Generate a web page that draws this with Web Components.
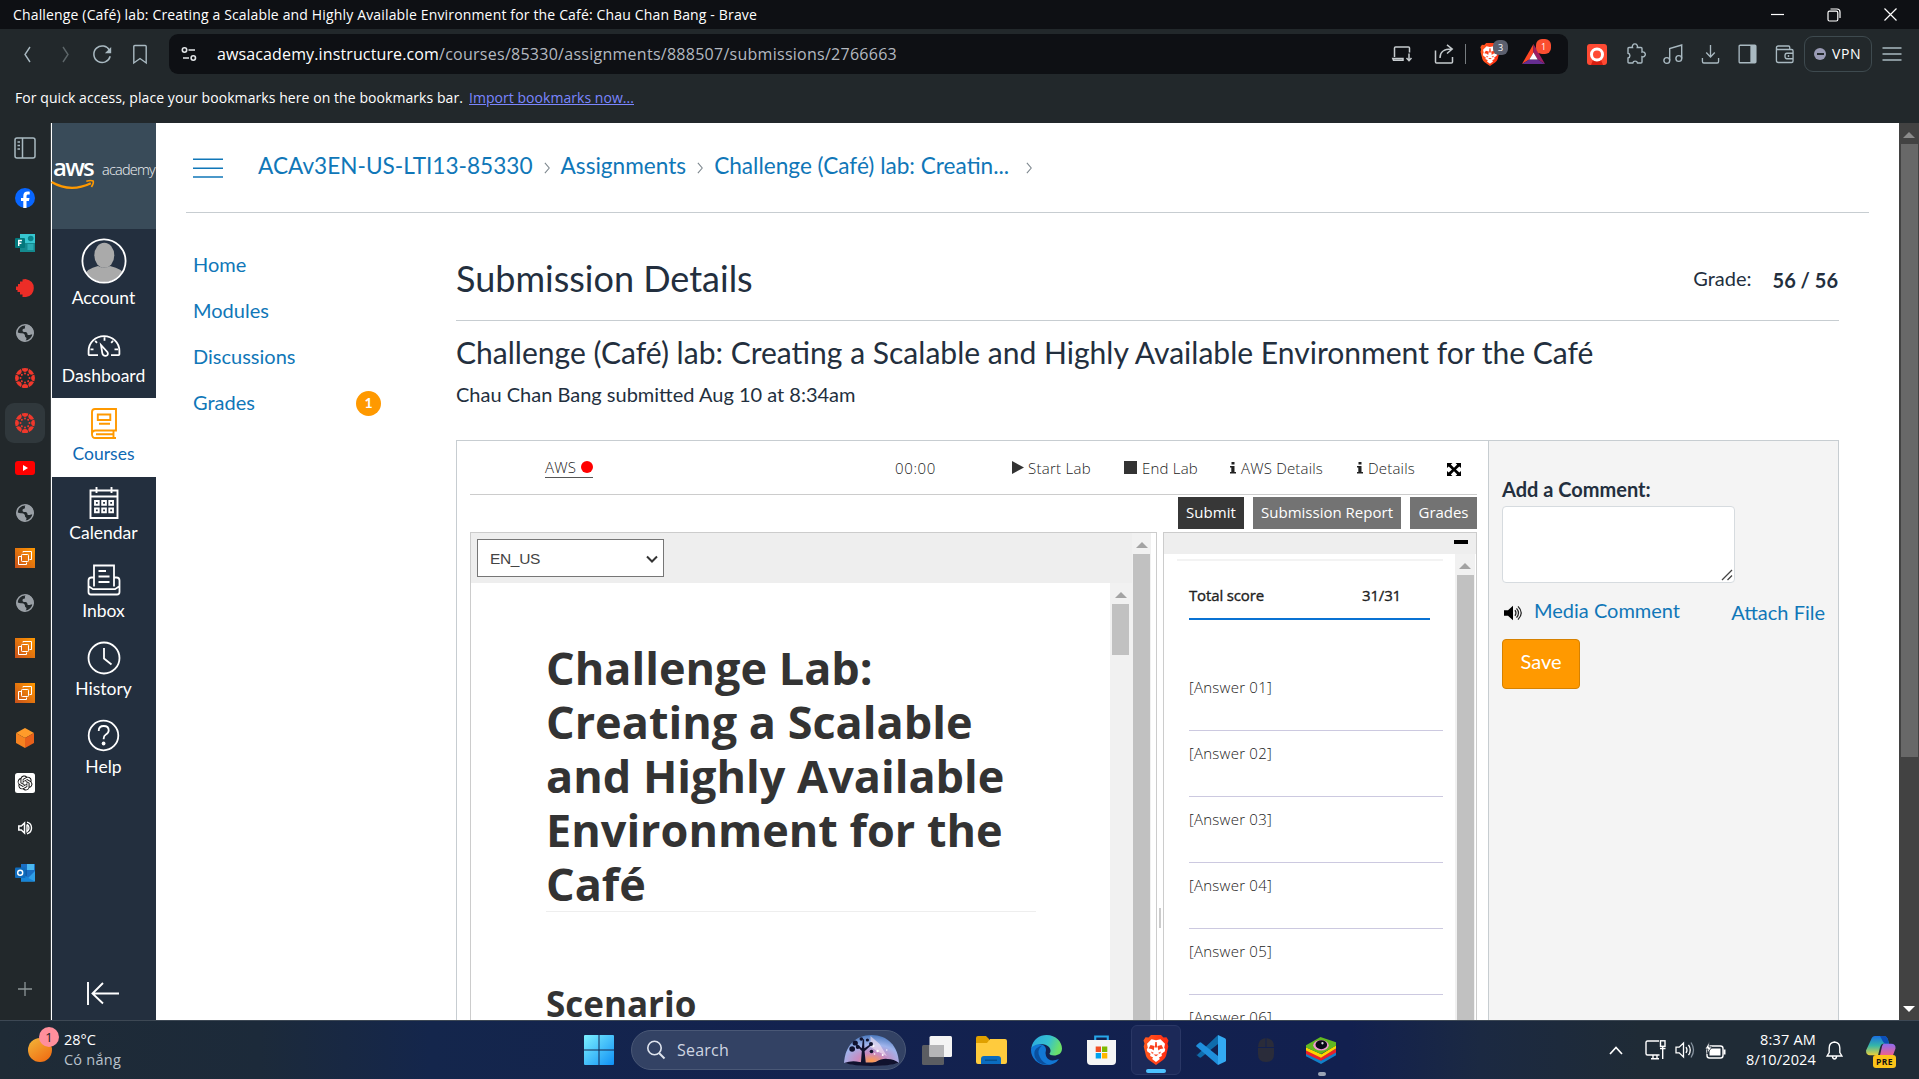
<!DOCTYPE html>
<html lang="en">
<head>
<meta charset="utf-8">
<title>Challenge (Café) lab: Chau Chan Bang</title>
<style>
html,body{margin:0;height:100%;overflow:hidden;background:#22282b}
</style>
</head>
<body>
<app-desktop></app-desktop>
<script>
const define = (name, html, setup) => {
  const t = document.createElement('template');
  t.innerHTML = '<style>*{box-sizing:border-box}:host{box-sizing:border-box}</style>' + html;
  customElements.define(name, class extends HTMLElement {
    constructor() { super(); this.attachShadow({mode: 'open'}).appendChild(t.content.cloneNode(true)); }
    connectedCallback() { if (setup) setup(this, this.shadowRoot); }
  });
};

/* Icon set: [viewBox, markup] */
const lion = '<defs><linearGradient id="l" x1="0" y1="0" x2="1" y2="0"><stop offset="0" stop-color="#ff5a1f"/><stop offset="1" stop-color="#ff2a12"/></linearGradient></defs><path fill="url(#l)" d="M8 0h10l2.500 2.500 3-.3 2 3.300-1 3 .8 3-2.300 9.500q-.8 2.500-3 4L13 30l-7-5q-2.200-1.500-3-4L.7 11.500l.8-3-1-3 2-3.300 3 .3z"/><path fill="#fff" d="M13 5.300l4.500-1 4.500 4.500-.8 4 1 1.500-.5 2.200-3.200 2.300.4 2.200-3 1.500 1 1.500-3.900 3-3.900-3 1-1.500-3-1.500.4-2.200-3.200-2.300-.5-2.200 1-1.500-.8-4 4.500-4.500z"/><path fill="#fb401c" d="M7.500 10l4 1-.8 4.500-2-1.500-3-.5zM18.500 10l-4 1 .8 4.500 2-1.500 3-.5zM10.500 19.500h5L13 21.200zM12.300 7h1.400l.5 5.500h-2.400zM8 16.500l3 1.500-2 .8zM18 16.500l-3 1.500 2 .8z"/>';
const ec2 = '<defs><linearGradient id="g" x1="0" y1="1" x2="1" y2="0"><stop offset="0" stop-color="#c8511b"/><stop offset="1" stop-color="#f90"/></linearGradient></defs><path fill="url(#g)" d="M0 0h20v20H0z"/><g fill="none" stroke="#fff" stroke-width="1"><rect x="6.500" y="6.500" width="7" height="7" rx=".8"/><path d="M8 4.500V3.500h8.500v8H14.500M6 8.500H3.500v8h8V14.500"/></g>';
const globe = '<circle cx="10" cy="10" r="8.200" fill="none" stroke="#9aa0a6" stroke-width="1.600"/><path fill="#9aa0a6" d="M11.500 1.500c-1.200.8-2 2-1.500 3.200 0 1.300-2.500.8-2.500 2.600 0 1.700 1.200 1.700 2.300 1.700 1.500 0 2.700.5 2.700 2.200 0 1.300 2.300.8 3.500.2l2.500-.2C19 5 15.500 2 11.500 1.500zM1.500 8.500c1.500 2 4 1.700 5.500 1.800 2.200.2 3.200 1.500 3 3 0 1.200 1.500.8 1.500 2.200 0 1.200-1 1.500-1 3C5 18.800 1 14.500 1.500 8.500z"/>';
const canvasDots = (() => { let s = ''; for (let i = 0; i < 8; i++) s += `<g transform="rotate(${i * 45} 10 10)"><path d="M6.700 .6a10 10 0 0 1 6.600 0q-.4 3.300-3.300 3.300T6.700.6z"/><circle cx="10" cy="5.500" r="1"/></g>`; return `<g fill="#f0382c">${s}</g>`; })();
const ICONS = {
  back: ['0 0 20 20', '<path d="M12 3L7 10.500 12 18" fill="none" stroke="#a9b9c1" stroke-width="1.400"/>'],
  fwd: ['0 0 20 20', '<path d="M8 3l5 7.500L8 18" fill="none" stroke="#5d6669" stroke-width="1.400"/>'],
  reload: ['0 0 20 20', '<path d="M18.200 12.300A8.300 8.300 0 1 1 17.600 6.500" fill="none" stroke="#a9b9c1" stroke-width="1.500"/><path d="M19.200 3v6.300h-6.300z" fill="#a9b9c1"/>'],
  mark: ['0 0 20 20', '<path d="M3.800 2.500q0-1 1-1h10.400q1 0 1 1V19l-6.200-4.500L3.800 19z" fill="none" stroke="#a9b9c1" stroke-width="1.400"/>'],
  tune: ['0 0 18 18', '<g fill="none" stroke="#e3e6e8" stroke-width="1.600"><circle cx="4.500" cy="5" r="2.200"/><path d="M8.500 5H15M3 13h6"/><circle cx="13.300" cy="13" r="2.200"/></g>'],
  laptop: ['0 0 20 20', '<g fill="none" stroke="#c6cbce" stroke-width="1.500"><path d="M2.500 13V4q0-1 1-1h13q1 0 1 1v4.500M.8 14.500H11v1.800H1.500zM17 9.500v7M14.500 14l2.500 2.700 2.500-2.700"/></g>'],
  share: ['0 0 20 20', '<g fill="none" stroke="#c6cbce" stroke-width="1.500"><path d="M1.500 6.500V18q0 1 1 1h15q1 0 1-1v-5M6 14c0-6 3-9 12-9M13 .8L18.200 5 13 9.500"/></g>'],
  lion: ['0 0 26 30', lion],
  bat: ['0 0 22 20', '<path fill="#ff4724" d="M11 0L0 20l7-4.500 4-7z"/><path fill="#9e1f63" d="M11 0l11 20-7-4.500-4-7z"/><path fill="#662d91" d="M0 20h22l-7-4.500H7z"/><path fill="#fff" d="M11 8.500l4 7H7z"/>'],
  rec: ['0 0 20 21', '<rect width="20" height="21" rx="3" fill="#ff4a33"/><path fill="#d81e10" d="M6 16h8l2 5H4z"/><circle cx="10" cy="10.500" r="5.500" fill="none" stroke="#fff" stroke-width="3"/>'],
  puzzle: ['0 0 20 20', '<path d="M5 3.500h2.500a2.600 2.600 0 1 1 4.800 0H16q1 0 1 1V8a2.500 2.500 0 1 1 0 4.700V18q0 1-1 1h-3.500a2.400 2.400 0 0 0-4.700 0H4q-1 0-1-1v-4a2.400 2.400 0 0 0 0-4.700V4.500q0-1 1-1z" fill="none" stroke="#a9b9c1" stroke-width="1.400"/>'],
  music: ['0 0 20 20', '<g fill="none" stroke="#a9b9c1" stroke-width="1.400"><circle cx="3.800" cy="16.500" r="2.900"/><circle cx="15.800" cy="14.500" r="2.900"/><path d="M6.700 16.500V4.500L18.700 1v13.500"/></g>'],
  down: ['0 0 20 20', '<path d="M10 1v12M5.500 8.500L10 13l4.500-4.500M1.500 14v3.500q0 1.500 1.500 1.500h14q1.500 0 1.500-1.500V14" fill="none" stroke="#a9b9c1" stroke-width="1.400"/>'],
  panel: ['0 0 20 20', '<rect x="1.200" y="1.200" width="17.600" height="17.600" rx="1" fill="none" stroke="#a9b9c1" stroke-width="1.400"/><path fill="#a9b9c1" d="M13 1h6v18h-6z"/>'],
  wallet: ['0 0 20 20', '<g fill="none" stroke="#a9b9c1" stroke-width="1.400"><path d="M15.500 5V3.300q0-1.300-1.300-1.300H3.500Q1.500 2 1.500 4v12.500q0 2 2 2h14q1.500 0 1.500-1.500V7q0-1.500-1.500-1.500H3.500Q1.500 5.500 1.500 4M19 9.300h-6.500q-2 0-2 2.700t2 2.700H19"/></g><circle cx="14.200" cy="12" r=".9" fill="#a9b9c1"/>'],
  menu: ['0 0 20 20', '<path d="M.5 4h19M.5 10h19M.5 16h19" stroke="#a9b9c1" stroke-width="1.400"/>'],
  min: ['0 0 13 13', '<path d="M0 6.500h13" stroke="#fff" stroke-width="1.200"/>'],
  restore: ['0 0 14 14', '<g fill="none" stroke="#fff" stroke-width="1.200"><rect x="1" y="3.200" width="9.800" height="9.800" rx="1.500"/><path d="M3.500 1h6.500q3 0 3 3v6"/></g>'],
  close: ['0 0 13 13', '<path d="M.5.5l12 12M12.500.5l-12 12" stroke="#fff" stroke-width="1.200"/>'],
  tabs: ['0 0 22 22', '<g fill="none" stroke="#a9b9c1" stroke-width="1.500"><rect x="1" y="1" width="20" height="20" rx="2"/><path d="M8.500 1v20"/><path d="M3.500 5h2.500M3.500 8.500h2.500M3.500 12h2.500"/></g>'],
  fb: ['0 0 20 20', '<circle cx="10" cy="10" r="10" fill="#0866ff"/><path fill="#fff" d="M8.300 20v-7H6v-3h2.300V8.300c0-3.300 1.500-4.700 4.500-4.700.6 0 1.400.1 1.900.2v2.700h-1.300c-1.400 0-1.900.6-1.900 1.900V10h3l-.6 3h-2.400v7z"/>'],
  forms: ['0 0 20 20', '<path fill="#37c6d0" d="M5 1h15v9H5z"/><path fill="#148a8f" d="M5 10h15v9H5z"/><path fill="#2aabb3" d="M12.500 11h6v6h-6z"/><circle cx="15.700" cy="5.500" r="2.800" fill="#08838a"/><rect y="5" width="10" height="10" rx="1" fill="#03787c"/><path d="M3.700 13V7.500h3.200M3.700 10.200h2.700" fill="none" stroke="#fff" stroke-width="1.400"/>'],
  red: ['0 0 20 20', '<path fill="#ec2d27" d="M10.500 1Q18.800 2.500 18.800 10T11 19H7.500v-2.500H5V14H2.500v-2H1V8.500h2V6h2V3.500h2.500V1.500z"/>'],
  globe: ['0 0 20 20', globe],
  canvas: ['0 0 20 20', canvasDots],
  yt: ['0 0 20 14', '<rect width="20" height="14" rx="3" fill="#f00"/><path fill="#fff" d="M8 4l5 3-5 3z"/>'],
  ec2: ['0 0 20 20', ec2],
  cube: ['0 0 20 20', '<path fill="#ff9b2a" d="M10 0l9 5-9 5-9-5z"/><path fill="#f58220" d="M1 5l9 5v10l-9-5z"/><path fill="#e8601a" d="M19 5l-9 5v10l9-5z"/>'],
  gpt: ['0 0 20 20', '<rect width="20" height="20" rx="2.500" fill="#fff"/><path transform="translate(2.500 2.500) scale(.625)" fill="#111" d="M22.282 9.821a5.985 5.985 0 0 0-.516-4.911 6.046 6.046 0 0 0-6.510-2.900A6.065 6.065 0 0 0 4.981 4.182a5.985 5.985 0 0 0-3.998 2.900 6.046 6.046 0 0 0 .743 7.097 5.980 5.980 0 0 0 .511 4.911 6.051 6.051 0 0 0 6.515 2.900A5.985 5.985 0 0 0 13.260 24a6.056 6.056 0 0 0 5.772-4.206 5.989 5.989 0 0 0 3.998-2.900 6.056 6.056 0 0 0-.748-7.073zm-9.022 12.608a4.476 4.476 0 0 1-2.876-1.041l.142-.080 4.778-2.758a.795.795 0 0 0 .393-.681v-6.737l2.020 1.169a.071.071 0 0 1 .038.052v5.583a4.504 4.504 0 0 1-4.495 4.494zm-9.661-4.125a4.471 4.471 0 0 1-.535-3.014l.142.085 4.783 2.758a.771.771 0 0 0 .781 0l5.843-3.369v2.332a.080.080 0 0 1-.033.062L9.740 19.950a4.499 4.499 0 0 1-6.141-1.646zM2.341 7.896a4.485 4.485 0 0 1 2.366-1.973V11.600a.766.766 0 0 0 .388.677l5.814 3.354-2.020 1.169a.076.076 0 0 1-.071 0l-4.830-2.787A4.504 4.504 0 0 1 2.341 7.872zm16.596 3.856L13.104 8.364 15.119 7.200a.076.076 0 0 1 .071 0l4.830 2.791a4.494 4.494 0 0 1-.677 8.104v-5.677a.790.790 0 0 0-.407-.667zm2.011-3.023l-.142-.085-4.774-2.782a.776.776 0 0 0-.785 0L9.409 9.230V6.897a.066.066 0 0 1 .028-.062l4.830-2.787a4.499 4.499 0 0 1 6.680 4.660zM8.307 12.863l-2.020-1.164a.080.080 0 0 1-.038-.057V6.074a4.499 4.499 0 0 1 7.376-3.454l-.142.081L8.704 5.459a.795.795 0 0 0-.393.681zm1.098-2.365l2.602-1.500 2.607 1.500v2.999l-2.597 1.500-2.607-1.500Z"/>'],
  sound: ['0 0 20 20', '<path fill="none" stroke="#fff" stroke-width="1.500" d="M3.800 8v4h2.500l3.200 3V5L6.300 8z"/><path d="M12 4.200q4.500 1.300 4.500 5.800T12 15.800M12 6.500V13.500q2-1 2-3.500t-2-3.500" fill="none" stroke="#fff" stroke-width="1.400"/>'],
  outlook: ['0 0 20 20', '<path fill="#1a6fc4" d="M6 1h14v17H6z"/><path fill="#4bb8f0" d="M12 1h7v6h-7z"/><path fill="#0f5aa8" d="M6 7h6v6H6z"/><path fill="#2f9fe8" d="M20 8v10.500H6V11l7 4z"/><path fill="#1684d8" d="M6 11l14 7.500H6z"/><rect y="4.500" width="10.500" height="10.500" rx="1" fill="#0f6cbd"/><circle cx="5.200" cy="9.700" r="2.500" fill="none" stroke="#fff" stroke-width="1.400"/>'],
  plus: ['0 0 14 14', '<path d="M7 0v14M0 7h14" stroke="#8d9598" stroke-width="1.300"/>'],
  swoosh: ['0 0 43 12', '<path d="M.5 3Q19 14 39 4.300" fill="none" stroke="#f90" stroke-width="2.300"/><path d="M34.500 2.200q4.500-1.300 6.700-.2.800 2-1.700 6" fill="none" stroke="#f90" stroke-width="1.600"/>'],
  account: ['0 0 46 46', '<defs><clipPath id="c"><circle cx="23" cy="23" r="21"/></clipPath></defs><circle cx="23" cy="23" r="21.500" fill="#243041"/><g clip-path="url(#c)" fill="#aaa"><ellipse cx="23.300" cy="17.300" rx="10" ry="12.500"/><path d="M4 46V37q1-6 13-9 6 3.500 12 0 13 3 14 9v9z"/></g><circle cx="23" cy="23" r="21.600" fill="none" stroke="#fff" stroke-width="1.800"/>'],
  dash: ['0 0 34 24', '<g fill="none" stroke="#fff" stroke-width="1.800"><path d="M11 22H2.500q-.9 0-.9-1v-3.500a15.400 15.400 0 0 1 30.800 0V21q0 1-.9 1h-7.500M17.500 3.500V7M8.200 7.200l1.800 2M26 7.200l-1.800 2M3.500 16h3M27.500 16H31"/><path d="M14 11.500l6.500 7.500q1.300 3-1.700 3.800-3 .2-3.500-2.800z"/></g>'],
  courses: ['0 0 26 31', '<g fill="none" stroke="#f90" stroke-width="1.900"><path d="M1 26V4q0-3 3-3h21v21.500H4.500Q1 22.500 1 26.300T4.500 30H25M22.500 22.500V30M5 26.300h17"/><path d="M6.800 6.500h12.500V12H6.800zM8 15.800h11"/></g>'],
  cal: ['0 0 30 33', '<g fill="none" stroke="#fff" stroke-width="1.900"><path d="M1.500 4.500h27V32h-27zM1.500 10.500h27M7.500 1v6M22.500 1v6M13 4.500h5"/><path d="M6 15h3.700v3.700H6zM13.200 15h3.700v3.700h-3.700zM20.300 15H24v3.700h-3.700zM6 22.500h3.700v3.700H6zM13.200 22.500h3.700v3.700h-3.700zM20.300 22.500H24v3.700h-3.700z"/></g>'],
  inbox: ['0 0 34 32', '<g fill="none" stroke="#fff" stroke-width="1.800"><path d="M7 22.500V1.500h20v21M7 13.500H4.500q-3 0-3 3V28q0 2.500 2.500 2.500h26q2.500 0 2.500-2.500V16.500q0-3-3-3H27M2 22.500l4 2.700h22l4-2.700M11.500 7h7.500M11.500 12.500h11M11.500 18h11"/></g>'],
  history: ['0 0 34 34', '<g fill="none" stroke="#fff" stroke-width="1.800"><circle cx="17" cy="17" r="15.500"/><path d="M17 7v10.500l7.500 6"/></g>'],
  help: ['0 0 34 34', '<g fill="none" stroke="#fff" stroke-width="1.800"><circle cx="16.500" cy="16.500" r="14.800"/><path d="M11.700 12q0-5 5-5t5 4.300q0 2.700-2.800 4.200-2.200 1.200-2.200 4v.8"/></g><circle cx="16.600" cy="24.500" r="1.900" fill="#fff"/>'],
  collapse: ['0 0 34 24', '<path d="M2 1v23M33 12.500H7M17 2L6.500 12.500 17 22.500" fill="none" stroke="#fff" stroke-width="1.900"/>'],
  burger: ['0 0 30 20', '<path d="M0 1.200h30M0 10.200h30M0 19h30" stroke="#1077b8" stroke-width="1.600"/>'],
  crumb: ['0 0 8 14', '<path d="M1 1l5 6-5 6" fill="none" stroke="#7c868d" stroke-width="1.200"/>'],
  play: ['0 0 12 13', '<path d="M0 0l12 6.500L0 13z" fill="#333"/>'],
  stop: ['0 0 13 13', '<path d="M0 0h13v13H0z" fill="#333"/>'],
  info: ['0 0 6 13', '<path d="M1.500 0h3v2.700h-3zM0 4.300h4.500v6.500H6V12.500H0v-1.700h1.300V6H0z" fill="#222"/>'],
  expand: ['0 0 14 14', '<path d="M0 0h5.500L3.800 1.700 7 5l3.200-3.300L8.500 0H14v5.500l-1.700-1.700L9 7l3.300 3.200L14 8.500V14H8.500l1.700-1.700L7 9l-3.200 3.300L5.500 14H0V8.500l1.700 1.700L5 7 1.700 3.800 0 5.500z" fill="#000"/>'],
  chev: ['0 0 12 8', '<path d="M1 1.500l5 5 5-5" fill="none" stroke="#333" stroke-width="2"/>'],
  grip: ['0 0 12 12', '<path d="M1 11L11 1M6.500 11L11 6.500" stroke="#444" stroke-width="1.300"/>'],
  speaker: ['0 0 19 17', '<path d="M0 5.500h4L9 .8v15.400L4 11.500H0z"/><g fill="none" stroke="#222" stroke-width="1.200"><path d="M11 5.500q2 3 0 6M12.500 3.500q4 5 0 10M14 1.500q6.500 7 0 14"/></g>'],
  weather: ['0 0 24 24', '<defs><linearGradient id="w" x1="0" y1="0" x2=".7" y2="1"><stop offset="0" stop-color="#f3b73a"/><stop offset="1" stop-color="#ef6f14"/></linearGradient></defs><circle cx="12" cy="12" r="12" fill="url(#w)"/>'],
  win: ['0 0 30 30', '<defs><linearGradient id="n" x1="0" y1="0" x2="1" y2="1"><stop offset="0" stop-color="#7cf0ff"/><stop offset="1" stop-color="#0f90f5"/></linearGradient></defs><path fill="url(#n)" d="M1 0h13.500v14.500H0V1q0-1 1-1zM15.500 0H29q1 0 1 1v13.500H15.500zM0 15.500h14.500V30H1q-1 0-1-1zM15.500 15.500H30V29q0 1-1 1H15.500z"/>'],
  search: ['0 0 20 20', '<circle cx="8.500" cy="8" r="6.700" fill="none" stroke="#dfe4ee" stroke-width="1.600"/><path d="M13 13l5.500 5.500" stroke="#dfe4ee" stroke-width="2"/>'],
  scene: ['0 0 56 32', '<defs><radialGradient id="s" cx=".5" cy=".85" r=".9"><stop offset="0" stop-color="#ff9a4a"/><stop offset=".28" stop-color="#c98bc0"/><stop offset=".6" stop-color="#9fb4ec"/><stop offset="1" stop-color="#3d6fb5"/></radialGradient></defs><path fill="url(#s)" d="M1 29C2 12 12 1 28 1s26 11 27 28q-27 5-54 0z"/><path fill="#fbe6f4" opacity=".6" d="M27 2l9 8 7 12-8-4-8-5z"/><g fill="#fff"><circle cx="30" cy="12" r="1"/><circle cx="34" cy="17" r="1.200"/><circle cx="39" cy="21" r="1"/><circle cx="31" cy="20" r=".8"/><circle cx="43" cy="16" r=".7"/></g><g fill="#10122e"><path d="M17.500 30l1-13-7-7 1-.8 6 5 1-9h1.200l.3 9 6-4 .6 1-6.400 6 1.300 13z"/><circle cx="12" cy="9" r="2.600"/><circle cx="18" cy="5" r="1.800"/><circle cx="24" cy="6" r="1.600"/><circle cx="9" cy="15" r="2.800"/><circle cx="14.500" cy="13" r="2"/><circle cx="27.500" cy="10" r="2"/><circle cx="28" cy="17.500" r="1.800"/><path d="M1 29q8-3 15-1 10 1 16 0 7-4 12-3 6 0 11 4-10 3-27 3T1 29z"/></g>'],
  task: ['0 0 31 29', '<rect x="1" y="9" width="22" height="20" rx="1.500" fill="#5b5d62"/><rect x="8.500" y="0" width="22.500" height="21" rx="1.500" fill="#f4f4f4"/><path fill="#b5b5b7" d="M8.500 9H23v12H8.500z"/>'],
  folder: ['0 0 31 28', '<path fill="#e0a000" d="M0 2q0-2 2-2h8l3 3v5H0z"/><path fill="#ffcb3d" d="M0 7h11l3-4h15q2 0 2 2v21q0 2-2 2H2q-2 0-2-2z"/><path fill="#0b6cc0" d="M5 28v-5q0-3 3-3h14q3 0 3 3v5z"/><path fill="#07508f" d="M9 23.500h12v1.500H9z"/>'],
  edge: ['0 0 31 30', '<defs><linearGradient id="e" x1="0" y1="0" x2="1" y2=".3"><stop offset="0" stop-color="#2aa7e0"/><stop offset=".6" stop-color="#35c1d0"/><stop offset="1" stop-color="#6be06a"/></linearGradient></defs><path fill="#1277d4" d="M0 15C0 9 7 8 12 10q3 1.500 3 5-1 3 0 6 3 7 13 3-4 6-12.500 6A15 15 0 0 1 0 15z"/><path fill="url(#e)" d="M.3 13C2 4 8.500 0 15.500 0 25 0 31 7 31 13.500c0 5-4 7-8 7-3 0-4.500-1-4.500-2 1.500-1.500 1.500-4.500-.5-6.500-4-4.500-14-4-17.700 1z"/><path fill="#0a4f9e" d="M11 10.500q-6 5-2 12 3 6 9 7-10 1-14-7-3-9 7-12z"/>'],
  store: ['0 0 30 30', '<path d="M8.500 7V1.500h13V7" fill="none" stroke="#27a7ea" stroke-width="2.200"/><path fill="#f5f5f5" d="M0 5h30v21q0 4-4 4H4q-4 0-4-4z"/><path fill="#f04f24" d="M9 11.500h5.500V17H9z"/><path fill="#7fba00" d="M15.500 11.500H21V17h-5.500z"/><path fill="#00a3ee" d="M9 18h5.500v5.500H9z"/><path fill="#ffb800" d="M15.500 18H21v5.500h-5.500z"/>'],
  code: ['0 0 30 30', '<path fill="#0f6cab" d="M.5 20.500L22 0v9L5.300 22.300q-1 .7-2 0L.6 20q-.8-.8-.1-1.500z"/><path fill="#1f8fdc" d="M.6 10L3.300 7.700q1-.7 2 0L22 21v9L.5 11.500q-.7-.8.1-1.500z"/><path fill="#33a9f2" d="M22 0l7 3.200q1 .5 1 1.600v20.400q0 1.100-1 1.600L22 30z"/>'],
  mouse: ['0 0 16 24', '<path fill="#2a2c3a" d="M7.500 0v9H0Q0 1 7.500 0zM8.500 0v9H16Q16 1 8.500 0zM0 10h16v6q0 8-8 8t-8-8z"/>'],
  stacks: ['0 0 31 28', '<path fill="#1180c9" d="M0 16l16 8 15-9v4L15.500 28 0 20z"/><path fill="#e8202a" d="M0 13.500l16 7.500 15-9v4L15.500 24.500 0 17.500z"/><path fill="#ffd400" d="M0 10.500L16 18 31 8.500V12l-15.500 9.500L0 14z"/><path fill="#62b921" d="M15 0l16 5.500V9l-15.500 8.500L0 11V8.500z"/><ellipse cx="15.500" cy="8.500" rx="8" ry="5.500" fill="#f09ad0"/><ellipse cx="15.800" cy="8" rx="6" ry="4.600" fill="#0a0a18"/><circle cx="17" cy="6.500" r="1.200" fill="#ddd"/>'],
  up: ['0 0 14 9', '<path d="M1 8l6-6.500L13 8" fill="none" stroke="#fff" stroke-width="1.700"/>'],
  net: ['0 0 21 20', '<g fill="none" stroke="#fff" stroke-width="1.400"><path d="M14 1H2.500Q1 1 1 2.500v11Q1 15 2.500 15h12M6 18.800h8M8 15v3.800M12 15v3.800"/><rect x="15.500" y=".8" width="4.500" height="5.500"/><path d="M17.700 6.500V19M15 8.500h5.500"/></g>'],
  vol: ['0 0 20 18', '<g fill="none" stroke="#fff" stroke-width="1.300"><path d="M1 6.200h3.200L8.500 2v14l-4.300-4.200H1zM11 6q2 3 0 6M13.500 3.800q3.500 5.200 0 10.400"/><path d="M16 1.500q5 7.500 0 15" stroke="#8793a0"/></g>'],
  batt: ['0 0 21 17', '<rect x="2" y="4" width="16" height="12" rx="2.500" fill="none" stroke="#fff" stroke-width="1.400"/><path fill="#fff" d="M4.500 6.500h11v7h-11zM18.500 7.500h2v5h-2z"/><path d="M4.500-.5L0 7h3l-1 5 5-7H4z" fill="#fff" stroke="#1f2b36" stroke-width=".8"/>'],
  bell: ['0 0 16 19', '<path d="M8 1Q3 1.500 3 7v4.500L1 15h14l-2-3.500V7Q13 1.500 8 1zM6 15.500Q6.500 18 8 18t2-2.500" fill="none" stroke="#fff" stroke-width="1.300"/>'],
  copilot: ['0 0 30 29', '<defs><linearGradient id="p" x1="0" y1="0" x2="0" y2="1"><stop offset="0" stop-color="#1a6fe0"/><stop offset=".5" stop-color="#35b6a8"/><stop offset="1" stop-color="#ecd13a"/></linearGradient><linearGradient id="q" x1="0" y1="0" x2="0" y2="1"><stop offset="0" stop-color="#8c6cf0"/><stop offset="1" stop-color="#f0608c"/></linearGradient></defs><path fill="url(#p)" d="M9 0h9q3 0 4 4l1 4h-6q-2 0-3 4l-2 8H4q-4 0-4-5L5 4q1-4 4-4z"/><path fill="#0c4fb8" d="M14 0h4q3 0 4 4l1 4h-4q-2-1-3-4z"/><path fill="url(#q)" d="M18 8h7q5 0 4.500 5L27 20H14l2-9q.5-3 2-3z"/>'],
};
customElements.define('ui-icon', class extends HTMLElement {
  constructor() { super(); this.attachShadow({mode: 'open'}); }
  connectedCallback() {
    const [vb, body] = ICONS[this.getAttribute('name')];
    const [w, h] = [this.getAttribute('w') || 20, this.getAttribute('h') || 20];
    this.shadowRoot.innerHTML = `<style>:host{display:block;flex:none;width:${w}px;height:${h}px}svg{display:block;width:100%;height:100%;overflow:visible}</style><svg viewBox="${vb}" preserveAspectRatio="none">${body}</svg>`;
  }
});

/* One line of text set to a fixed measure by tracking */
define('fit-text', '<style>:host{display:block;flex:none;white-space:nowrap}span{display:inline-block}:host([underline]) span{text-decoration:underline}</style><span><slot></slot></span>', (el, root) => {
  const w = +el.getAttribute('w'), s = root.querySelector('span');
  const n = el.textContent.length;
  s.style.letterSpacing = (w - s.getBoundingClientRect().width) / n + 'px';
  el.style.width = w + 'px';
});

define('title-bar', `<style>:host{display:flex;flex:none;height:29px;background:#0e1014;color:#fff;font:14px "Open Sans",sans-serif;align-items:center;padding:0 22px 0 13px}
.sp{flex:1}.win{display:flex;gap:43px;align-items:center}</style>
<fit-text w="744">Challenge (Café) lab: Creating a Scalable and Highly Available Environment for the Café: Chau Chan Bang - Brave</fit-text><div class="sp"></div>
<div class="win"><ui-icon name="min" w="13" h="13"></ui-icon><ui-icon name="restore" w="14" h="14"></ui-icon><ui-icon name="close" w="13" h="13"></ui-icon></div>`);

define('url-badge', `<style>:host{position:absolute;left:11px;top:-7px;min-width:15px;height:15px;border-radius:6px;background:var(--bg);color:#fff;font:9px/15px "Open Sans",sans-serif;text-align:center}</style><slot></slot>`);

define('tool-bar', `<style>:host{display:flex;flex:none;height:50px;align-items:center;color:#fff;font:16px "Open Sans",sans-serif;padding:0 16px 0 18px}
.nav{display:flex;gap:17.500px;width:151px}.url{display:flex;align-items:center;width:1399px;height:40px;border-radius:9px;background:#0e1014;padding:0 23px 0 11px}
.url fit-text{margin-top:-1px}.p{color:#b4b9c0}.sp{flex:1}.sep{width:1px;height:20px;background:#777c80;margin:0 14px 0 11px}.b{position:relative}
.ext{display:flex;align-items:center;gap:18px;margin-left:19px}.vpn{display:flex;align-items:center;gap:6px;width:68px;height:36px;margin:0 -8px 0 -8px;border:1px solid #3e4a4f;border-radius:9px;padding-left:9px;font-size:14px}.vpn fit-text{margin-top:-1px}
.dot{width:12px;height:12px;border-radius:50%;background:#9a9bb5;display:flex;align-items:center;justify-content:center}.dot:after{content:"";width:7px;height:1.500px;background:#22282b}</style>
<div class="nav"><ui-icon name="back"></ui-icon><ui-icon name="fwd" style="margin-left:-1px"></ui-icon><ui-icon name="reload"></ui-icon><ui-icon name="mark"></ui-icon></div>
<div class="url"><ui-icon name="tune" w="18" h="18" style="margin-right:19px"></ui-icon><fit-text w="222">awsacademy.instructure.com</fit-text><fit-text w="458" class="p">/courses/85330/assignments/888507/submissions/2766663</fit-text>
<div class="sp"></div><ui-icon name="laptop" style="margin-right:22px"></ui-icon><ui-icon name="share"></ui-icon><div class="sep"></div>
<div class="b"><ui-icon name="lion" w="20" h="23"></ui-icon><url-badge style="--bg:#5b5f6e;left:13px;top:-3px">3</url-badge></div>
<div class="b" style="margin-left:22px"><ui-icon name="bat" w="23" h="20"></ui-icon><url-badge style="--bg:#fb4e30;left:14px;top:-5px">1</url-badge></div></div>
<div class="ext"><ui-icon name="rec" h="21"></ui-icon><ui-icon name="puzzle"></ui-icon><ui-icon name="music"></ui-icon><ui-icon name="down" w="19"></ui-icon><ui-icon name="panel" w="19"></ui-icon><ui-icon name="wallet" w="19"></ui-icon>
<div class="vpn"><div class="dot"></div><fit-text w="29">VPN</fit-text></div><ui-icon name="menu"></ui-icon></div>`);

define('bookmark-bar', `<style>:host{display:flex;flex:none;height:44px;align-items:center;padding:0 0 8px 15px;color:#fff;font:14px "Open Sans",sans-serif}.l{color:#7b86ff;margin-left:6px}</style>
<fit-text w="448">For quick access, place your bookmarks here on the bookmarks bar.</fit-text><fit-text underline class="l" w="165">Import bookmarks now...</fit-text>`);

define('side-tab', `<style>:host{display:flex;flex:none;width:40px;height:40px;align-items:center;justify-content:center;border-radius:9px}:host([active]){background:#30383c}</style><slot></slot>`);
define('side-tabs', `<style>:host{display:flex;flex-direction:column;flex:none;width:51px;height:897px;background:#22282b;border-right:1px solid #3b4144;padding:5px 5px 11px;gap:5px}</style>
<side-tab style="margin-bottom:5px"><ui-icon name="tabs" w="22" h="22"></ui-icon></side-tab>` +
  ['fb','forms','red','globe','canvas','canvas*','yt','globe','ec2','globe','ec2','ec2','cube','gpt','sound','outlook'].map(n => {
    const a = n.endsWith('*') ? ' active' : '', k = n.replace('*', ''), h = k === 'yt' ? 14 : 20;
    return `<side-tab${a}><ui-icon name="${k}" h="${h}"></ui-icon></side-tab>`; }).join('') +
  `<side-tab style="margin-top:auto"><ui-icon name="plus" w="14" h="14"></ui-icon></side-tab>`);

define('nav-item', `<style>:host{display:flex;flex-direction:column;flex:none;height:78px;align-items:center;color:#fff;font:17.500px/21px Lato,sans-serif}
:host([active]){background:#fff;color:#0e68b3;height:79px}:host([tall]){height:91px}.i{height:50px;display:flex;align-items:center}:host([tall]) .i{height:63px}.t{margin-top:-5px}</style>
<div class="i"><slot name="icon"></slot></div><div class="t"><slot></slot></div>`);
define('canvas-nav', `<style>:host{display:flex;flex-direction:column;flex:none;width:105px;height:897px;background:#232f3e;border-left:1px solid #fff}
.logo{flex:none;height:106px;background:#394b59;color:#fff;display:flex;align-items:flex-start;padding:30px 0 0 1px;gap:9px}
nav-item{margin-left:-1px;padding-left:0}nav-item[active]{margin-left:0;padding-right:1px}
.aws{font:600 24px/28px "Open Sans",sans-serif;width:40px}.ac{font:300 14.500px/20px "Open Sans",sans-serif;margin-top:7px;color:#f0f2f4}
ui-icon.s{margin:-2px 0 0 -2px}.end{margin:auto 0 15px 34px}</style>
<div class="logo"><div class="aws"><fit-text w="40">aws</fit-text><ui-icon class="s" name="swoosh" w="44" h="12"></ui-icon></div><fit-text class="ac" w="53">academy</fit-text></div>
<nav-item tall><ui-icon slot="icon" name="account" w="46" h="46"></ui-icon>Account</nav-item>
<nav-item><ui-icon slot="icon" name="dash" w="34" h="23"></ui-icon>Dashboard</nav-item>
<nav-item active><ui-icon slot="icon" name="courses" w="26" h="31"></ui-icon>Courses</nav-item>
<nav-item><ui-icon slot="icon" name="cal" w="30" h="33"></ui-icon>Calendar</nav-item>
<nav-item><ui-icon slot="icon" name="inbox" w="34" h="32"></ui-icon>Inbox</nav-item>
<nav-item><ui-icon slot="icon" name="history" w="34" h="34"></ui-icon>History</nav-item>
<nav-item><ui-icon slot="icon" name="help" w="34" h="34"></ui-icon>Help</nav-item>
<ui-icon class="end" name="collapse" w="34" h="24"></ui-icon>`);

define('crumb-bar', `<style>:host{display:flex;height:90px;border-bottom:1px solid #c7cdd1;align-items:center;padding:0 0 4px 7px;color:#1077b8;font:22.620px Lato,sans-serif}
ui-icon.b{margin:5px 35px 0 0}ui-icon.c{margin:4px 10px 0 11px}</style>
<ui-icon class="b" name="burger" w="30" h="20"></ui-icon><span>ACAv3EN-US-LTI13-85330</span><ui-icon class="c" name="crumb" w="7" h="12"></ui-icon><span>Assignments</span><ui-icon class="c" name="crumb" w="7" h="12"></ui-icon><span>Challenge (Café) lab: Creatin...</span><ui-icon class="c" style="margin-left:17px" name="crumb" w="7" h="12"></ui-icon>`);

define('course-menu', `<style>:host{display:flex;flex-direction:column;flex:none;width:270px;padding:28px 75px 0 7px;color:#1077b8;font:20px Lato,sans-serif}
div{display:flex;height:46px;align-items:center;justify-content:space-between}b{width:25px;height:25px;margin-top:2px;border-radius:50%;background:#f90;color:#fff;font:700 14px/24px Lato,sans-serif;text-align:center}</style>
<div>Home</div><div>Modules</div><div>Discussions</div><div>Grades<b>1</b></div>`);

/* Vertical scrollbar: --track, --thumb, --arrow, --len */
define('scroll-bar', `<style>:host{display:flex;flex-direction:column;align-items:center;flex:none;width:21px;background:var(--track,#f1f1f1)}
.up{border:6px solid transparent;border-top:0;border-bottom:6px solid var(--arrow,#a3a3a3);margin-top:9px;flex:none}.th{width:17px;margin-top:6px;background:var(--thumb,#c1c1c1);height:var(--len,100%)}
.dn{display:none;border:6px solid transparent;border-bottom:0;border-top:6px solid #fff;margin:auto 0 8px}:host([down]) .dn{display:block}</style><div class="up"></div><div class="th"></div><div class="dn"></div>`);

define('lab-button', `<style>:host{display:flex;height:32px;align-items:center;justify-content:center;background:#737373;color:#fff;font:15px "Open Sans",sans-serif;padding-bottom:2px}:host([dark]){background:#373737}</style><slot></slot>`);
define('lab-bar', `<style>:host{display:flex;height:54px;border-bottom:1px solid #ccc;align-items:center;color:#222;font:350 15px "Open Sans",sans-serif}
.aws{display:flex;gap:5px;align-items:center;margin-left:75px;width:48px;height:21px;border-bottom:1px solid #555}.dot{width:12px;height:12px;border-radius:50%;background:red}
.g{display:flex;align-items:center;gap:4px}</style>
<div class="aws"><fit-text w="31">AWS</fit-text><div class="dot"></div></div>
<fit-text w="41" style="margin-left:302px">00:00</fit-text>
<div class="g" style="margin-left:76px"><ui-icon name="play" w="12" h="13"></ui-icon><fit-text w="63">Start Lab</fit-text></div>
<div class="g" style="margin-left:33px;gap:5px"><ui-icon name="stop" w="13" h="13"></ui-icon><fit-text w="56">End Lab</fit-text></div>
<div class="g" style="margin-left:32px;gap:5px"><ui-icon name="info" w="6" h="12"></ui-icon><fit-text w="82">AWS Details</fit-text></div>
<div class="g" style="margin-left:34px;gap:5px"><ui-icon name="info" w="6" h="12"></ui-icon><fit-text w="47">Details</fit-text></div>
<ui-icon name="expand" w="14" h="13" style="margin-left:32px;margin-top:3px"></ui-icon>`);

define('lab-readme', `<style>:host{display:flex;width:687px;flex:none;border:1px solid #ccc;border-bottom:0;font:16px "Open Sans",sans-serif;color:#333}
.m{width:661px;display:flex;flex-direction:column}.top{flex:none;height:50px;background:#eee;padding:6px}.sel{display:flex;align-items:center;justify-content:space-between;width:187px;height:38px;background:#fff;border:1px solid #767676;padding:1px 5px 0 12px;font:15.500px "Liberation Sans",sans-serif;color:#444}
.doc{display:flex;flex:1;min-height:0}.txt{width:639px;background:#fff;overflow:hidden;padding:58px 74px 0 75px}
h1{margin:0;font:700 45px/54px "Open Sans",sans-serif;border-bottom:1px solid #eee;white-space:nowrap}h2{margin:72px 0 0;font:700 35px/40px "Open Sans",sans-serif}</style>
<div class="m"><div class="top"><div class="sel"><fit-text w="50">EN_US</fit-text><ui-icon name="chev" w="12" h="8"></ui-icon></div></div>
<div class="doc"><div class="txt"><h1>Challenge Lab:<br>Creating a Scalable<br>and Highly Available<br>Environment for the<br>Café</h1><h2>Scenario</h2></div><scroll-bar style="--len:51px;width:22px;padding-right:1px"></scroll-bar></div></div>
<scroll-bar style="width:19px"></scroll-bar>`);

define('answer-row', `<style>:host{display:flex;height:66px;border-bottom:1px solid #ccc9e0;align-items:flex-start;padding-top:12px;font:350 15px/21px "Open Sans",sans-serif;color:#222}span{white-space:nowrap}</style><span><slot></slot></span>`, (el, root) => {
  const s = root.querySelector('span');
  s.style.letterSpacing = (83 - s.getBoundingClientRect().width) / 11 + 'px';
});
define('lab-score', `<style>:host{display:flex;flex-direction:column;flex:1;border:1px solid #ccc;border-bottom:0;color:#222;font:15px "Open Sans",sans-serif}
.h{flex:none;height:21px;background:#eee;display:flex;justify-content:flex-end;padding:7px 8px}.h div{width:14px;height:4px;background:#000}
.b{display:flex;flex:1;min-height:0}.c{width:291px;padding:5px 12px 0 13px;overflow:hidden}.card{border-top:2px solid #f3f3f3;padding-left:12px}
.t{display:flex;height:59px;width:241px;justify-content:space-between;align-items:center;padding:10px 29px 0 0;border-bottom:2px solid #0972d3;-webkit-text-stroke:.35px #222}
.a{margin-top:45px}</style>
<div class="h"><div></div></div><div class="b"><div class="c"><div class="card"><div class="t"><fit-text w="75">Total score</fit-text><fit-text w="39">31/31</fit-text></div>
<div class="a"></div></div></div><scroll-bar style="width:20px"></scroll-bar></div>`, (el, root) => {
  root.querySelector('.a').innerHTML = [1,2,3,4,5,6].map(i => `<answer-row>[Answer 0${i}]</answer-row>`).join('');
});

define('lab-frame', `<style>:host{display:flex;flex-direction:column;width:1031px;flex:none;padding:0 11px 0 13px;overflow:hidden}
.btn{display:flex;flex:none;justify-content:flex-end;gap:9px;height:37px;padding-top:2px}.p{display:flex;flex:1;min-height:0}.sp{width:6px;display:flex;align-items:flex-start;justify-content:center;padding-top:376px}.sp div{width:2px;height:20px;background:#ccc}</style>
<lab-bar></lab-bar><div class="btn"><lab-button dark style="width:66px"><fit-text w="50">Submit</fit-text></lab-button><lab-button style="width:148px"><fit-text w="132">Submission Report</fit-text></lab-button><lab-button style="width:67px"><fit-text w="50">Grades</fit-text></lab-button></div>
<div class="p"><lab-readme></lab-readme><div class="sp"><div></div></div><lab-score></lab-score></div>`);

define('comment-panel', `<style>:host{display:flex;flex-direction:column;flex:1;background:#f4f4f4;border-left:1px solid #c7cdd1;padding:36px 13px 0 13px;font:20px/24px Lato,sans-serif;color:#1077b8}
b{color:#232f3e;height:29px}.ta{width:233px;height:77px;background:#fff;border:1px solid #d6dbdf;border-radius:4px;display:flex;justify-content:flex-end;align-items:flex-end;padding:1px}
.l{display:flex;margin-top:15px;height:29px}.l ui-icon{margin:7px 11px 0 2px}.l :last-child{margin:2px 0 0 auto}.save{margin-top:12px;width:78px;height:50px;background:#f90;border:1px solid #d68100;border-radius:4px;color:#fff;display:flex;align-items:center;justify-content:center;padding-bottom:6px}</style>
<b>Add a Comment:</b><div class="ta"><ui-icon name="grip" w="12" h="12"></ui-icon></div>
<div class="l"><ui-icon name="speaker" w="19" h="16"></ui-icon><span>Media Comment</span><span>Attach File</span></div><div class="save">Save</div>`);

define('submission-view', `<style>:host{display:flex;flex-direction:column;width:1383px;flex:none;color:#232f3e;font:20px/24px Lato,sans-serif}
.h{display:flex;flex:none;height:108px;border-bottom:1px solid #c7cdd1;justify-content:space-between;padding:43px 1px 0 0}h1{font:400 36px/44px Lato,sans-serif;margin:0}.g{display:flex;padding-top:10px;gap:21px}.g b{margin-top:2px}
h2{font:400 30.050px/36px Lato,sans-serif;margin:13px 0 12px}.s{height:24px}.box{display:flex;flex:1;min-height:0;margin-top:34px;border:1px solid #c7cdd1;border-bottom:0}</style>
<div class="h"><h1>Submission Details</h1><div class="g"><span>Grade:</span><b>56 / 56</b></div></div>
<h2>Challenge (Café) lab: Creating a Scalable and Highly Available Environment for the Café</h2><div class="s">Chau Chan Bang submitted Aug 10 at 8:34am</div>
<div class="box"><lab-frame></lab-frame><comment-panel></comment-panel></div>`);

define('canvas-page', `<style>:host{display:flex;flex-direction:column;flex:1;background:#fff;height:897px;padding:0 30px}.b{display:flex;flex:1;min-height:0}</style>
<crumb-bar></crumb-bar><div class="b"><course-menu></course-menu><submission-view></submission-view></div>`);

define('task-bar', `<style>:host{display:flex;flex:none;height:59px;border-top:1px solid #3d4854;align-items:center;color:#fff;font:14.500px/20px "Open Sans",sans-serif;
background:linear-gradient(90deg,#1f2b36 0,#1c2a3a 260px,#14264c 430px,#13224f 800px,#12204f 1350px,#1b2942 1480px,#1f2b36 1640px,#1f2b36 100%)}
:host>*{flex:none}.w{position:relative;margin-left:28px;width:24px}.bd{position:absolute;left:11px;top:-11px;width:20px;height:20px;border-radius:50%;background:#ff8f9c;color:#222;font-size:13px;text-align:center}
.wt{margin-left:12px;width:60px}.wt div{color:#b9c2cc}.s{display:flex;align-items:center;width:275px;height:40px;border-radius:20px;background:#334264;border:1px solid #4a5876;padding:0 5px 0 14px;margin-left:17px;color:#cfd6e2;font-size:16px}
.s fit-text{margin-left:11px}.s .sc{margin-left:auto}.br{position:relative;width:50px;height:50px;border-radius:6px;background:#1c2958;border:1px solid #2a3765;display:flex;justify-content:center;padding-top:9px;margin-left:15px}
.u{position:absolute;left:14px;bottom:1px;width:20px;height:4px;border-radius:2px;background:#4cc2ff}.st{position:relative;margin-left:32px}.st i{position:absolute;left:12px;top:35px;width:8px;height:4px;border-radius:2px;background:#9aa3b5}
.c{text-align:right;width:80px;margin-left:10px;display:flex;flex-direction:column;align-items:flex-end}.cp{position:relative;margin-left:23px}.pre{position:absolute;left:7px;top:19px;width:23px;height:13px;border-radius:3px;background:#fcc419;color:#111;font:700 8.500px/13px "Open Sans",sans-serif;text-align:center;letter-spacing:.5px}</style>
<div class="w"><ui-icon name="weather" w="24" h="24"></ui-icon><div class="bd">1</div></div><div class="wt"><fit-text w="32">28°C</fit-text><div><fit-text w="57">Có nắng</fit-text></div></div>
<ui-icon name="win" w="30" h="30" style="margin-left:460px"></ui-icon>
<div class="s"><ui-icon name="search" w="20" h="20"></ui-icon><fit-text w="52">Search</fit-text><ui-icon class="sc" name="scene" w="57" h="32"></ui-icon></div>
<ui-icon name="task" w="31" h="29" style="margin-left:15px"></ui-icon>
<ui-icon name="folder" w="31" h="28" style="margin-left:24px"></ui-icon>
<ui-icon name="edge" w="31" h="30" style="margin-left:24px"></ui-icon>
<ui-icon name="store" w="29" h="30" style="margin-left:25px"></ui-icon>
<div class="br"><ui-icon name="lion" w="26" h="30"></ui-icon><div class="u"></div></div>
<ui-icon name="code" w="30" h="30" style="margin-left:15px"></ui-icon>
<ui-icon name="mouse" w="16" h="24" style="margin-left:32px"></ui-icon>
<div class="st"><ui-icon name="stacks" w="30" h="27"></ui-icon><i></i></div>
<ui-icon name="up" w="14" h="9" style="margin-left:273px"></ui-icon>
<ui-icon name="net" w="21" h="20" style="margin-left:22px"></ui-icon>
<ui-icon name="vol" w="20" h="18" style="margin-left:9px"></ui-icon>
<ui-icon name="batt" w="21" h="17" style="margin-left:10px"></ui-icon>
<div class="c"><fit-text w="56">8:37 AM</fit-text><fit-text w="70">8/10/2024</fit-text></div>
<ui-icon name="bell" w="17" h="19" style="margin-left:10px"></ui-icon>
<div class="cp"><ui-icon name="copilot" w="30" h="28"></ui-icon><div class="pre">PRE</div></div>`);

define('app-desktop', `<style>:host{display:flex;flex-direction:column;width:1919px;height:1079px;overflow:hidden;background:#22282b}.b{display:flex;height:897px;flex:none}</style>
<title-bar></title-bar><tool-bar></tool-bar><bookmark-bar></bookmark-bar>
<div class="b"><side-tabs></side-tabs><canvas-nav></canvas-nav><canvas-page></canvas-page><scroll-bar style="--track:#424242;--thumb:#686868;--arrow:#8b8b8b;--len:613px;width:20px" down></scroll-bar></div>
<task-bar></task-bar>`);
</script>
</body>
</html>
